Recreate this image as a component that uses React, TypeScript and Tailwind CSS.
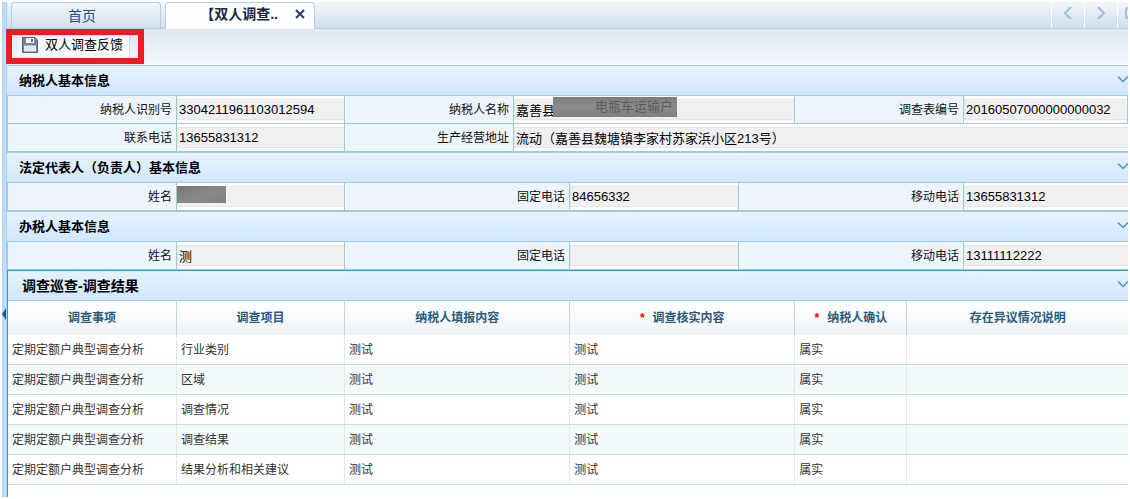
import { useId, useState } from "react";
import type { ReactNode } from "react";

function Chevron({ d, className, width = 2 }: { d: string; className: string; width?: number }) {
  return (
    <svg className={className} viewBox="0 0 12 12" fill="none" stroke="currentColor" strokeWidth={width} aria-hidden="true">
      <path d={d} />
    </svg>
  );
}

function SaveIcon() {
  return (
    <svg className="h-4 w-4 shrink-0" viewBox="0 0 16 16" aria-hidden="true">
      <path d="M0.5 0.5H13L15.5 3V15.5H0.5Z" fill="#6f8799" stroke="#4a667c" />
      <path d="M4 1H12V6H4Z" fill="#f4f8fb" />
      <path d="M9 2H11V5H9Z" fill="#5d788d" />
      <path d="M2 8.5H14V14.5H2Z" fill="#e3e9ee" />
    </svg>
  );
}

type FieldProps = { label: string; value: string; wide?: boolean; cover?: ReactNode };

function Field({ label, value, wide, cover }: FieldProps) {
  const id = useId();
  return (
    <>
      <label
        htmlFor={id}
        className="flex h-7 items-center justify-end border-r border-b border-[#a3cbc8] bg-[#edf5fc] pr-1 text-xs whitespace-nowrap text-[#111]"
      >
        {label}
      </label>
      <div
        className={`relative h-7 border-r border-b border-[#a3cbc8] bg-white pt-[3px] last:border-r-0 ${wide ? "col-span-3" : ""}`}
      >
        <input
          id={id}
          readOnly
          defaultValue={value}
          className="block h-[21px] w-full border border-r-0 border-[#dce8ee] bg-[#f0f0f0] pb-px pl-px text-[13px] text-black outline-none"
        />
        {cover}
      </div>
    </>
  );
}

function Section({ title, children, grid }: { title: string; children: ReactNode; grid: string }) {
  const [open, setOpen] = useState(true);
  return (
    <section>
      <SectionHeader title={title} open={open} toggle={() => setOpen(!open)} />
      {open && <div className={`grid border-l border-[#a3cbc8] ${grid}`}>{children}</div>}
    </section>
  );
}

type HeaderProps = { title: string; open: boolean; toggle: () => void; strong?: boolean };

function SectionHeader({ title, open, toggle, strong }: HeaderProps) {
  return (
    <div
      className={`flex h-[31px] items-center justify-between border-t border-b bg-linear-to-b from-[#e6f3ff] to-[#d0e7fe] ${
        strong ? "border-t-[#3d95cf] border-b-[#abcbea] pl-3.5" : "border-[#a3c8e0] pl-3"
      }`}
    >
      <h2 className={`font-bold text-black ${strong ? "text-sm" : "text-[13px]"}`}>{title}</h2>
      <button type="button" aria-label={title} aria-expanded={open} onClick={toggle} className="-mr-px pb-1 text-[#3f97dc]">
        <Chevron d="M1 3.5L6 8.5L11 3.5" className="h-3 w-3" width={1.5} />
      </button>
    </div>
  );
}

const threeColumns = "grid-cols-[169fr_168fr_169fr_281fr_169fr_164fr]";
const contactColumns = "grid-cols-[169fr_168fr_225fr_169fr_225fr_164fr]";

const items = ["行业类别", "区域", "调查情况", "调查结果", "结果分析和相关建议"];

const columns = [
  { name: "调查事项", required: false },
  { name: "调查项目", required: false },
  { name: "纳税人填报内容", required: false },
  { name: "调查核实内容", required: true },
  { name: "纳税人确认", required: true },
  { name: "存在异议情况说明", required: false },
];

function ResultPanel() {
  const [open, setOpen] = useState(true);
  return (
    <section className="flex-1 border-l border-[#3d95cf] bg-white">
      <SectionHeader title="调查巡查-调查结果" open={open} toggle={() => setOpen(!open)} strong />
      {open && (
        <table className="w-full table-fixed border-separate border-spacing-0 text-xs text-[#333]">
          <colgroup>
            <col className="w-[15.1%]" />
            <col className="w-[15%]" />
            <col className="w-[20.1%]" />
            <col className="w-[20.1%]" />
            <col className="w-[10%]" />
            <col />
          </colgroup>
          <thead>
            <tr>
              {columns.map((c) => (
                <th
                  key={c.name}
                  scope="col"
                  className="h-[34px] border-r border-[#bcdad6] bg-linear-to-b from-white to-[#f0f4f8] p-0 text-center font-bold text-[#2b5a7b] last:border-r-0"
                >
                  {c.required && <span className="mr-2 text-[#f00]">*</span>}
                  {c.name}
                </th>
              ))}
            </tr>
          </thead>
          <tbody>
            {items.map((item) => (
              <tr key={item} className="even:bg-[#f2fafc]">
                {["定期定额户典型调查分析", item, "测试", "测试", "属实", ""].map((text, i) => (
                  <td
                    key={i}
                    className="h-[30px] border-r border-b border-r-[#dcebe4] border-b-[#c5dfda] p-0 pl-1 whitespace-nowrap last:border-r-0"
                  >
                    {text}
                  </td>
                ))}
              </tr>
            ))}
          </tbody>
        </table>
      )}
    </section>
  );
}

export default function App() {
  return (
    <div className="flex min-h-screen overflow-hidden bg-white p-0.5 font-['Liberation_Sans','Noto_Sans_CJK_SC',sans-serif]">
      <aside className="flex w-[5px] shrink-0 items-center border-r border-[#a9cdec] bg-linear-to-r from-[#b3d3f2] to-[#c9e2f8]">
        <button type="button" aria-label="收起" className="mt-32 text-[#12599c]">
          <svg className="h-3 w-1" viewBox="0 0 4 12" aria-hidden="true">
            <path d="M4 0V12L0 6Z" fill="currentColor" />
          </svg>
        </button>
      </aside>
      <main className="flex min-w-0 flex-1 flex-col">
        <nav className="flex h-[27px] items-stretch justify-between border-b border-[#b3d0ee] bg-linear-to-b from-[#f2f7fa] to-[#cfdfea]">
          <div className="flex gap-1 pl-1">
            <button
              type="button"
              className="w-[150px] rounded-t border border-b-0 border-[#b5cce6] bg-linear-to-b from-[#f0f6fa] to-[#d3e0ec] pr-2 text-sm text-[#2c4a78]"
            >
              首页
            </button>
            <div className="-mb-px flex w-[150px] items-center justify-end gap-4 rounded-t border border-b-0 border-[#b5cce6] bg-linear-to-b from-[#fafcfe] to-white pr-2 pb-1">
              <button type="button" className="text-sm font-bold text-[#1b2540]">
                【双人调查..
              </button>
              <button type="button" aria-label="关闭" className="text-[#2a3c66]">
                <Chevron d="M2 2L10 10M10 2L2 10" className="h-3 w-3" />
              </button>
            </div>
          </div>
          <div className="flex overflow-hidden text-[#9dbfe2]">
            <button type="button" aria-label="向左" className="flex w-[33px] items-center justify-center border-l border-white pb-1">
              <Chevron d="M9 0L3 6L9 12" className="h-3 w-3" />
            </button>
            <button type="button" aria-label="向右" className="flex w-[33px] items-center justify-center border-l border-white pb-1">
              <Chevron d="M3 0L9 6L3 12" className="h-3 w-3" />
            </button>
            <button type="button" aria-label="窗口" className="flex w-[11px] items-center justify-end border-l border-white pb-1">
              <span className="h-3 w-[3px] rounded-l-sm border-2 border-r-0 border-current" />
            </button>
          </div>
        </nav>
        <div className="flex h-9 items-start border-b border-white bg-linear-to-b from-[#dde8f0] to-[#f3f7fa]">
          <div className="-ml-px h-[35px] border-[6px] border-[#ed1c24] pr-2 pl-1.5">
            <button
              type="button"
              className="flex h-[23px] items-center gap-[7px] border-r border-[#d5dfe8] bg-linear-to-r from-[#f0f5f8] to-white pr-1.5 pb-1 pl-1 text-[13px] whitespace-nowrap text-black"
            >
              <SaveIcon />
              双人调查反馈
            </button>
          </div>
        </div>
        <Section title="纳税人基本信息" grid={threeColumns}>
          <Field label="纳税人识别号" value="3304211961103012594" />
          <Field
            label="纳税人名称"
            value="嘉善县"
            cover={
              <span className="absolute top-px left-[39px] flex h-5 w-[124px] items-center justify-end bg-linear-to-b from-[#7c7c7c] via-[#8c8c8c] to-[#7e7e7e] pr-1 text-[13px] whitespace-nowrap text-[#5c5c5c]">
                电瓶车运输户
              </span>
            }
          />
          <Field label="调查表编号" value="20160507000000000032" />
          <Field label="联系电话" value="13655831312" />
          <Field label="生产经营地址" value="流动（嘉善县魏塘镇李家村苏家浜小区213号）" wide />
        </Section>
        <Section title="法定代表人（负责人）基本信息" grid={contactColumns}>
          <Field
            label="姓名"
            value=""
            cover={<span className="absolute top-[3px] left-0 h-[17px] w-[49px] bg-linear-to-br from-[#777] via-[#888] to-[#808080]" />}
          />
          <Field label="固定电话" value="84656332" />
          <Field label="移动电话" value="13655831312" />
        </Section>
        <Section title="办税人基本信息" grid={contactColumns}>
          <Field label="姓名" value="测" />
          <Field label="固定电话" value="" />
          <Field label="移动电话" value="13111112222" />
        </Section>
        <ResultPanel />
      </main>
    </div>
  );
}
